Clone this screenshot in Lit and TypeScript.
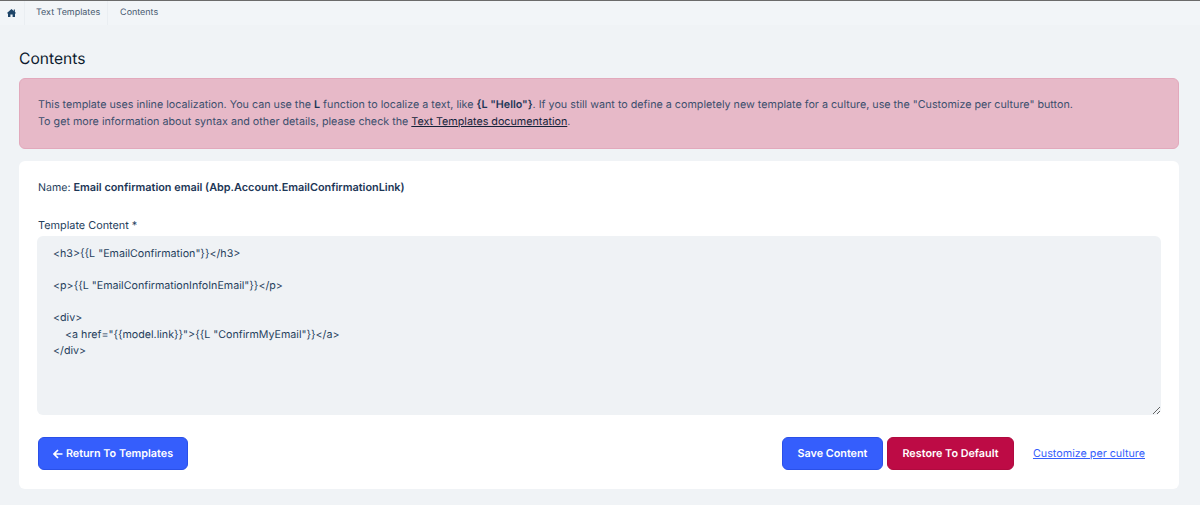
import { LitElement, html, css } from "lit";
import { customElement } from "lit/decorators.js";

const CODE = `<h3>{{L "EmailConfirmation"}}</h3>

<p>{{L "EmailConfirmationInfoInEmail"}}</p>

<div>
    <a href="{{model.link}}">{{L "ConfirmMyEmail"}}</a>
</div>`;

@customElement("app-root")
export class AppRoot extends LitElement {
  static styles = css`
    :host { display: block; height: 505px; overflow: hidden; background: #f0f3f6; color: #25405c; text-rendering: geometricPrecision;
      font-family: Inter, "Liberation Sans", sans-serif; font-size: 10.87px; line-height: 16px; border-top: 1px solid #6b6b6b; box-sizing: border-box; }
    .crumbs { display: flex; align-items: center; height: 24px; font-size: 8.95px; color: #46586f; background: #f2f5f8; }
    .crumbs > * { display: flex; align-items: center; height: 100%; border-right: 1px solid #eaeef2; }
    .crumbs > *:last-child { border: 0; }
    .home { width: 25px; padding-left: 7px; box-sizing: border-box; }
    .c1 { padding: 0 7px 0 11px; }
    .c2 { padding-left: 12px; }
    .main { padding: 0 21px 0 19px; }
    h1 { margin: 0; font-size: 15.6px; font-weight: 400; color: #0c1a2e; line-height: 20px; padding-top: 24px; height: 53px; box-sizing: border-box; }
    .alert { box-sizing: border-box; height: 71px; padding: 18px; background: #e7b9c8; border: 1px solid #e2a9bc; border-radius: 6px; line-height: 16.6px; color: #3c4f6d; font-size: 10.74px; }
    .alert b { font-weight: 600; color: #1c3656; }
    .alert a { color: #14233a; text-decoration: underline; }
    .card { box-sizing: border-box; margin-top: 12px; height: 328px; background: #fff; border-radius: 6px; padding: 18px 19px 0; }
    .name b { font-weight: 600; color: #1c3656; font-size: 10.87px; }
    .name { height: 39px; font-size: 10.6px; }
    label { display: block; height: 18px; line-height: 14px; }
    .code { display: block; box-sizing: border-box; width: calc(100% + 2px); margin: 0 -1px; height: 179px; border: 0; outline: 0; border-radius: 6px; background: #eff2f5; color: #25405c; padding: 9.5px 16px; font: inherit; font-size: 10.68px; line-height: 16.2px; resize: vertical; text-rendering: geometricPrecision; }
    .actions { display: flex; align-items: center; margin-top: 22px; gap: 4px; }
    .spacer { flex: 1; }
    button { box-sizing: border-box; height: 33px; border-radius: 6px; color: #fff; font: 600 10.8px Inter, "Liberation Sans", sans-serif; padding: 0; text-rendering: geometricPrecision; }
    .blue { background: #355efc; border: 1px solid #2a50e8; }
    .red { background: #bd0b45; border: 1px solid #b00a3f; }
    .back { width: 150px; display: flex; align-items: center; justify-content: center; gap: 3px; }
    .save { width: 101px; }
    .restore { width: 127px; }
    .link { color: #355efc; text-decoration: underline; margin: 0 15px 0 15px; font-size: 10.75px; }
  `;

  render() {
    return html`
      <nav class="crumbs">
        <span class="home"><svg width="9" height="8" viewBox="0 0 9 8" fill="#1d4468"><path d="M4.5 0 9 4 8 4.7V8H5.6V5.4H3.4V8H1V4.7L0 4ZM6.8.6h1.1V3L6.8 2Z"/></svg></span>
        <span class="c1">Text Templates</span>
        <span class="c2">Contents</span>
      </nav>
      <main class="main">
        <h1>Contents</h1>
        <div class="alert">
          This template uses inline localization. You can use the <b>L</b> function to localize a text, like <b>{L "Hello"}</b>. If you still want to define a completely new template for a culture, use the "Customize per culture" button.<br />
          To get more information about syntax and other details, please check the <a href="#">Text Templates documentation</a>.
        </div>
        <section class="card">
          <div class="name">Name: <b>Email confirmation email (Abp.Account.EmailConfirmationLink)</b></div>
          <label>Template Content *</label>
          <textarea class="code" .value=${CODE}></textarea>
          <div class="actions">
            <button class="blue back"><svg width="10" height="10" viewBox="0 0 10 10" fill="none" stroke="#fff" stroke-width="1.7"><path d="M9.5 5H1.2M5 1 1 5l4 4"/></svg>Return To Templates</button>
            <span class="spacer"></span>
            <button class="blue save">Save Content</button>
            <button class="red restore">Restore To Default</button>
            <a class="link" href="#">Customize per culture</a>
          </div>
        </section>
      </main>
    `;
  }
}
